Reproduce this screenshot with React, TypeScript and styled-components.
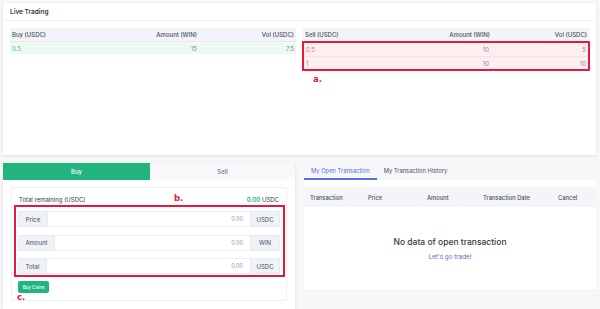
import * as React from "react";
import styled, { createGlobalStyle } from "styled-components";

const GlobalStyle = createGlobalStyle`
  html, body {
    margin: 0;
    padding: 0;
    background: #f7f7f9;
    font-family: Inter, "Noto Sans", sans-serif;
    color: #495057;
  }
  * { box-sizing: border-box; }
`;

const Page = styled.div`
  width: 600px;
  height: 309px;
  overflow: hidden;
  padding: 3px 4px 0 3px;
  display: flex;
  flex-direction: column;
  gap: 8px;
`;

const Card = styled.section`
  background: #fff;
  box-shadow: 0 1px 3px rgba(30, 32, 37, 0.12);
`;

const TopCard = styled(Card)`
  height: 152px;
`;

const CardTitle = styled.h4`
  margin: 0;
  height: 18px;
  padding: 0 7px;
  display: flex;
  align-items: center;
  font-size: 6.5px;
  font-weight: 600;
  color: #343a40;
  border-bottom: 1px solid #eff2f7;
`;

const Books = styled.div`
  display: grid;
  grid-template-columns: 1fr 1fr;
  gap: 7px;
  padding: 7px;
  position: relative;
`;

const Row = styled.div<{ $tone?: "head" | "buy" | "sell" }>`
  display: grid;
  grid-template-columns: 1fr 100px 97px;
  height: 13px;
  align-items: center;
  font-size: 6px;
  background: ${(p) =>
    p.$tone === "head" ? "#f1f4f9" : p.$tone === "buy" ? "#edf9f3" : p.$tone === "sell" ? "#fdeff0" : "transparent"};
  color: ${(p) => (p.$tone === "head" ? "#495057" : "#8088a8")};
  font-weight: ${(p) => (p.$tone === "head" ? 500 : 400)};
  & + & {
    border-top: 1px solid ${(p) => (p.$tone === "sell" ? "#fbe3e5" : "transparent")};
  }
`;

const Cell = styled.span<{ $right?: boolean; $color?: string }>`
  padding: 0 2px;
  text-align: ${(p) => (p.$right ? "right" : "left")};
  color: ${(p) => p.$color || "inherit"};
  white-space: nowrap;
`;

const Highlight = styled.div`
  border: 2px solid #e5193d;
  margin: 0 -1px;
  border-radius: 1px;
  & > div {
    height: 13px;
  }
`;

const Note = styled.span<{ $x: number; $y: number }>`
  position: absolute;
  left: ${(p) => p.$x}px;
  top: ${(p) => p.$y}px;
  font-family: "DejaVu Sans", sans-serif;
  font-size: 8.5px;
  font-weight: 700;
  color: #e5193d;
  line-height: 1;
`;

const Bottom = styled.div`
  display: grid;
  grid-template-columns: 292px 1fr;
  gap: 9px;
  flex: 1;
`;

const TradeCard = styled(Card)`
  position: relative;
`;

const SideTabs = styled.div`
  display: grid;
  grid-template-columns: 147px 1fr;
  height: 17px;
`;

const SideTab = styled.div<{ $active?: boolean }>`
  display: flex;
  align-items: center;
  justify-content: center;
  font-size: 6px;
  font-weight: 500;
  background: ${(p) => (p.$active ? "#22b47d" : "#f8f9fb")};
  color: ${(p) => (p.$active ? "#fff" : "#6a73a8")};
`;

const FormBody = styled.div`
  padding: 7px 8px 0 8px;
`;

const FormBox = styled.div`
  border: 1px solid #eef0f5;
  border-radius: 2px;
  padding: 5px 6px 7px 6px;
`;

const Remaining = styled.div`
  display: flex;
  justify-content: space-between;
  align-items: center;
  height: 12px;
  font-size: 6px;
  color: #343a40;
  padding: 0 1px;
`;

const Green = styled.span`
  color: #22b47d;
  font-weight: 600;
`;

const Fields = styled.div`
  margin: 0 -5px 0 -4px;
  border: 2px solid #e5193d;
  padding: 4px 3px 1px 2px;
  display: flex;
  flex-direction: column;
  gap: 7.5px;
`;

const Group = styled.div`
  display: flex;
  height: 16px;
`;

const Addon = styled.span<{ $w: number }>`
  width: ${(p) => p.$w}px;
  flex: none;
  display: flex;
  align-items: center;
  justify-content: center;
  background: #eff2f7;
  border: 1px solid #e6e9ef;
  font-size: 6px;
  color: #495057;
`;

const Input = styled.div`
  flex: 1;
  display: flex;
  align-items: center;
  justify-content: flex-end;
  padding: 0 7px;
  border-top: 1px solid #eceff4;
  border-bottom: 1px solid #eceff4;
  font-size: 5.5px;
  color: #9096ad;
`;

const BuyButton = styled.button`
  display: block;
  margin-top: 4px;
  height: 12px;
  width: 31px;
  padding: 0;
  border: none;
  border-radius: 2px;
  background: #22b47d;
  color: #fff;
  font-family: inherit;
  font-size: 4.5px;
  font-weight: 500;
`;

const TxPanel = styled.div`
  display: flex;
  flex-direction: column;
`;

const TxTabs = styled.div`
  display: flex;
  height: 17px;
`;

const TxTab = styled.div<{ $active?: boolean }>`
  display: flex;
  align-items: center;
  padding: 0 7px;
  font-size: 5.8px;
  color: ${(p) => (p.$active ? "#556ee6" : "#495057")};
  border-bottom: 2px solid ${(p) => (p.$active ? "#556ee6" : "transparent")};
`;

const TxCard = styled(Card)`
  height: 111px;
  padding-top: 7px;
  box-shadow: none;
  border-bottom: 1px solid #eef0f4;
`;

const TxHead = styled.div`
  display: grid;
  grid-template-columns: 58px 59px 56px 75px 1fr;
  align-items: center;
  height: 20px;
  padding-left: 6px;
  background: #f3f5f9;
  font-size: 5.8px;
  font-weight: 500;
  color: #495057;
`;

const Empty = styled.div`
  display: flex;
  flex-direction: column;
  align-items: center;
  padding-top: 30px;
  gap: 6px;
`;

const EmptyTitle = styled.div`
  font-size: 8.5px;
  font-weight: 500;
  color: #343a40;
`;

const EmptyLink = styled.div`
  font-size: 6.3px;
  color: #5a6ad0;
`;

const buyRows = [["0.5", "15", "7.5"]];
const sellRows = [
  ["0.5", "10", "5"],
  ["1", "10", "10"],
];

const fields = [
  { label: "Price", w: 30, unit: "USDC" },
  { label: "Amount", w: 37, unit: "WIN" },
  { label: "Total", w: 29, unit: "USDC" },
];

export default function App() {
  return (
    <>
      <GlobalStyle />
      <Page>
        <TopCard>
          <CardTitle>Live Trading</CardTitle>
          <Books>
            <div>
              <Row $tone="head">
                <Cell>Buy (USDC)</Cell>
                <Cell $right>Amount (WIN)</Cell>
                <Cell $right>Vol (USDC)</Cell>
              </Row>
              {buyRows.map((r, i) => (
                <Row key={i} $tone="buy">
                  <Cell $color="#34c38f">{r[0]}</Cell>
                  <Cell $right>{r[1]}</Cell>
                  <Cell $right>{r[2]}</Cell>
                </Row>
              ))}
            </div>
            <div>
              <Row $tone="head">
                <Cell>Sell (USDC)</Cell>
                <Cell $right>Amount (WIN)</Cell>
                <Cell $right>Vol (USDC)</Cell>
              </Row>
              <Highlight>
                {sellRows.map((r, i) => (
                  <Row key={i} $tone="sell">
                    <Cell $color="#f46a6a">{r[0]}</Cell>
                    <Cell $right>{r[1]}</Cell>
                    <Cell $right>{r[2]}</Cell>
                  </Row>
                ))}
              </Highlight>
            </div>
            <Note $x={310} $y={54}>a.</Note>
          </Books>
        </TopCard>

        <Bottom>
          <TradeCard>
            <SideTabs>
              <SideTab $active>Buy</SideTab>
              <SideTab>Sell</SideTab>
            </SideTabs>
            <FormBody>
              <FormBox>
                <Remaining>
                  <span>Total remaining (USDC)</span>
                  <span>
                    <Green>0.00</Green> USDC
                  </span>
                </Remaining>
                <Fields>
                  {fields.map((f) => (
                    <Group key={f.label}>
                      <Addon $w={f.w}>{f.label}</Addon>
                      <Input>0.00</Input>
                      <Addon $w={30}>{f.unit}</Addon>
                    </Group>
                  ))}
                </Fields>
                <BuyButton>Buy Coins</BuyButton>
              </FormBox>
            </FormBody>
            <Note $x={171} $y={31}>b.</Note>
            <Note $x={14} $y={130}>c.</Note>
          </TradeCard>

          <TxPanel>
            <TxTabs>
              <TxTab $active>My Open Transaction</TxTab>
              <TxTab>My Transaction History</TxTab>
            </TxTabs>
            <TxCard>
              <TxHead>
                <span>Transaction</span>
                <span>Price</span>
                <span>Amount</span>
                <span>Transaction Date</span>
                <span>Cancel</span>
              </TxHead>
              <Empty>
                <EmptyTitle>No data of open transaction</EmptyTitle>
                <EmptyLink>Let's go trade!</EmptyLink>
              </Empty>
            </TxCard>
          </TxPanel>
        </Bottom>
      </Page>
    </>
  );
}
